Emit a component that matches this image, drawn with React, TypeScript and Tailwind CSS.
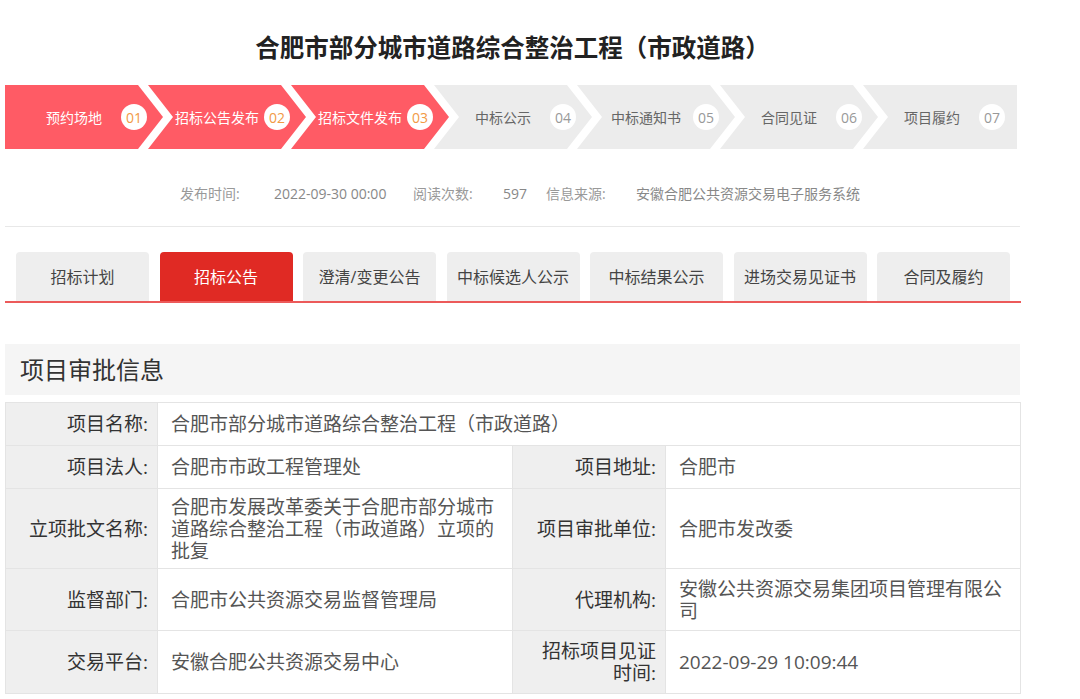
import React from 'react';

const steps = [
    { name: '预约场地', no: '01', done: true },
    { name: '招标公告发布', no: '02', done: true },
    { name: '招标文件发布', no: '03', done: true },
    { name: '中标公示', no: '04', done: false },
    { name: '中标通知书', no: '05', done: false },
    { name: '合同见证', no: '06', done: false },
    { name: '项目履约', no: '07', done: false },
];

const tabs = ['招标计划', '招标公告', '澄清/变更公告', '中标候选人公示', '中标结果公示', '进场交易见证书', '合同及履约'];

const shapeFirst =
    'w-[158px] [clip-path:polygon(0_0,calc(100%_-_25px)_0,100%_50%,calc(100%_-_25px)_100%,0_100%)]';
const shapeMiddle =
    'w-[158px] -ml-[15px] [clip-path:polygon(0_0,calc(100%_-_25px)_0,100%_50%,calc(100%_-_25px)_100%,0_100%,25px_50%)]';
const shapeLast = 'w-[154px] -ml-[15px] [clip-path:polygon(0_0,100%_0,100%_100%,0_100%,25px_50%)]';

function Label({ children }: { children: React.ReactNode }) {
    return (
        <td className="bg-[#efefef] border border-[#e4e4e4] text-right pl-[15px] pr-[9px] text-[#333] align-middle">
            {children}
        </td>
    );
}

function Value({ children, colSpan }: { children: React.ReactNode; colSpan?: number }) {
    return (
        <td colSpan={colSpan} className="bg-white border border-[#e4e4e4] pl-[13px] pr-[12px] text-[#555] align-middle">
            {children}
        </td>
    );
}

export default function App() {
    return (
        <div
            className="w-[1080px] h-[699px] overflow-hidden bg-white"
            style={{ fontFamily: '"Open Sans", "Noto Sans CJK SC", sans-serif' }}
        >
            <div className="w-[1015px] ml-[5px]">
                {/* title */}
                <h1 className="pt-[32px] text-center text-[24.5px] leading-[32px] font-bold text-[#222]">
                    合肥市部分城市道路综合整治工程（市政道路）
                </h1>

                {/* steps */}
                <div className="mt-[21px] flex h-[64px] w-[1012px]">
                    {steps.map((s, i) => {
                        const shape = i === 0 ? shapeFirst : i === steps.length - 1 ? shapeLast : shapeMiddle;
                        return (
                            <div
                                key={s.no}
                                className={`${shape} shrink-0 flex items-center ${s.done ? 'bg-[#ff5b65]' : 'bg-[#ececec]'}`}
                            >
                                <span
                                    className={`ml-[24px] w-[90px] text-center text-[14px] whitespace-nowrap ${
                                        s.done ? 'text-white' : 'text-[#666]'
                                    }`}
                                >
                                    {s.name}
                                </span>
                                <span
                                    className={`ml-[2px] w-[26px] h-[26px] rounded-full bg-white flex items-center justify-center text-[14px] ${
                                        s.done ? 'text-[#f29a45]' : 'text-[#999]'
                                    }`}
                                >
                                    {s.no}
                                </span>
                            </div>
                        );
                    })}
                </div>

                {/* meta */}
                <div className="mt-[35px] pl-[175px] flex items-center text-[14px] leading-[20px] text-[#999] whitespace-nowrap">
                    <span className="w-[94px]">发布时间:</span>
                    <span className="w-[139px] text-[#888]">2022-09-30 00:00</span>
                    <span className="w-[90px]">阅读次数:</span>
                    <span className="w-[43px] text-[#888]">597</span>
                    <span className="w-[90px]">信息来源:</span>
                    <span className="text-[#888]">安徽合肥公共资源交易电子服务系统</span>
                </div>
                <div className="mt-[22px] h-px bg-[#e8e8e8]" />

                {/* tabs */}
                <div className="mt-[25px] pl-[11px] flex gap-[10.5px]">
                    {tabs.map((t, i) => (
                        <div
                            key={t}
                            className={`w-[133px] h-[49px] rounded-t-[4px] flex items-center justify-center text-[16px] ${
                                i === 1 ? 'bg-[#e02a24] text-white' : 'bg-[#eeeeee] text-[#444]'
                            }`}
                        >
                            {t}
                        </div>
                    ))}
                </div>
                <div className="h-[2px] w-[1016px] bg-[#ec5a5a]" />

                {/* section header */}
                <div className="mt-[41px] h-[51px] bg-[#f5f5f5] flex items-center pl-[15px] text-[24px] text-[#333]">
                    项目审批信息
                </div>

                {/* info table */}
                <table className="mt-[7px] w-[1015px] border-collapse table-fixed text-[19px] leading-[22px]">
                    <colgroup>
                        <col className="w-[152px]" />
                        <col className="w-[355px]" />
                        <col className="w-[153px]" />
                        <col className="w-[355px]" />
                    </colgroup>
                    <tbody>
                        <tr className="h-[43px]">
                            <Label>项目名称:</Label>
                            <Value colSpan={3}>合肥市部分城市道路综合整治工程（市政道路）</Value>
                        </tr>
                        <tr className="h-[43px]">
                            <Label>项目法人:</Label>
                            <Value>合肥市市政工程管理处</Value>
                            <Label>项目地址:</Label>
                            <Value>合肥市</Value>
                        </tr>
                        <tr className="h-[80px]">
                            <Label>立项批文名称:</Label>
                            <Value>合肥市发展改革委关于合肥市部分城市道路综合整治工程（市政道路）立项的批复</Value>
                            <Label>项目审批单位:</Label>
                            <Value>合肥市发改委</Value>
                        </tr>
                        <tr className="h-[62px]">
                            <Label>监督部门:</Label>
                            <Value>合肥市公共资源交易监督管理局</Value>
                            <Label>代理机构:</Label>
                            <Value>安徽公共资源交易集团项目管理有限公司</Value>
                        </tr>
                        <tr className="h-[63px]">
                            <Label>交易平台:</Label>
                            <Value>安徽合肥公共资源交易中心</Value>
                            <Label>招标项目见证时间:</Label>
                            <Value>2022-09-29 10:09:44</Value>
                        </tr>
                    </tbody>
                </table>
            </div>
        </div>
    );
}
